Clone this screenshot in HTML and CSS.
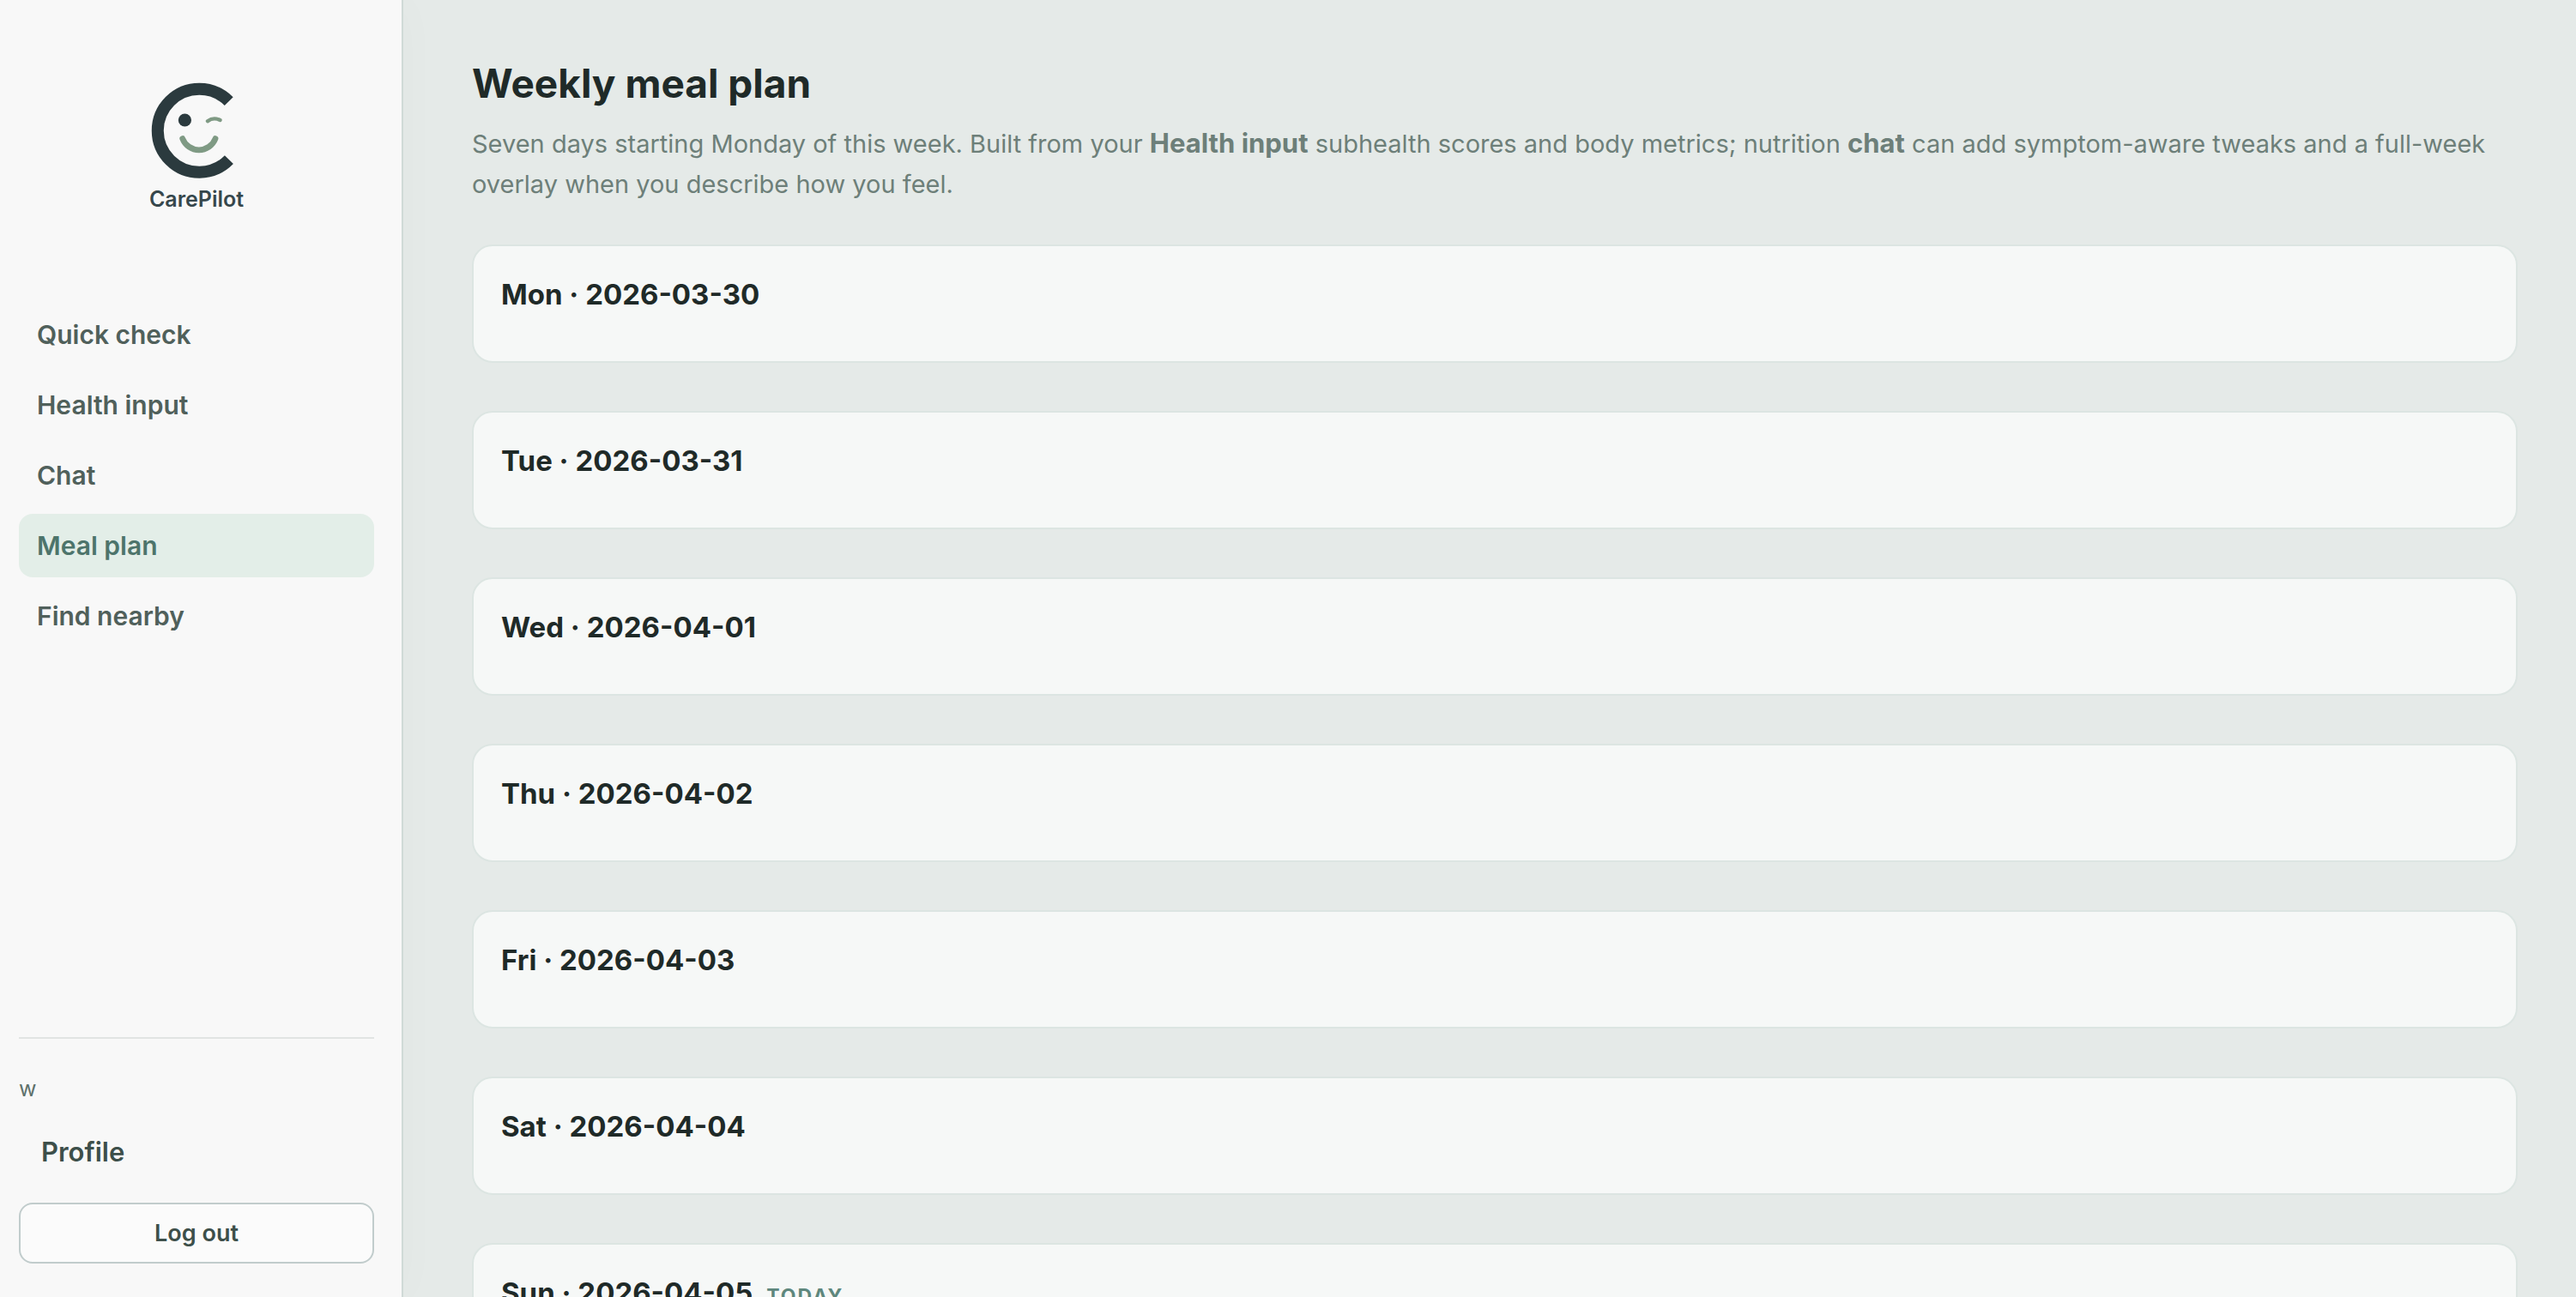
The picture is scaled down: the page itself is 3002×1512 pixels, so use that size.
FILE: index.html
```html
<!DOCTYPE html>
<html lang="en">
<head>
  <meta charset="utf-8">
  <meta name="viewport" content="width=device-width, initial-scale=1">
  <title>Weekly meal plan · CarePilot</title>
  <link rel="stylesheet" href="styles.css">
</head>
<body>
  <div class="app">
    <aside class="sidebar">
      <a class="brand" href="#">
        <svg class="brand-mark" viewBox="0 0 114 122" fill="none" aria-hidden="true">
          <path d="M94.7 26.1A48.5 48.5 0 1 0 94.9 94.2" stroke="#2b3a3e" stroke-width="14"/>
          <circle cx="43.4" cy="48" r="7.6" fill="#2b3a3e"/>
          <path d="M70 49.2Q76.5 44.2 84.5 48" stroke="#7f9a84" stroke-width="4.4" stroke-linecap="round"/>
          <path d="M40.7 69.6A20.5 20.5 0 0 0 79 69.6" stroke="#7f9a84" stroke-width="6.8" stroke-linecap="round"/>
        </svg>
        <span class="brand-name">CarePilot</span>
      </a>
      <nav class="nav" aria-label="Main">
        <a class="nav-link" href="#">Quick check</a>
        <a class="nav-link" href="#">Health input</a>
        <a class="nav-link" href="#">Chat</a>
        <a class="nav-link active" href="#" aria-current="page">Meal plan</a>
        <a class="nav-link" href="#">Find nearby</a>
      </nav>
      <div class="account">
        <span class="user">w</span>
        <a class="profile" href="#">Profile</a>
        <button class="logout" type="button">Log out</button>
      </div>
    </aside>
    <main class="content">
      <header class="page-head">
        <h1>Weekly meal plan</h1>
        <p>Seven days starting Monday of this week. Built from your <strong>Health input</strong> subhealth scores and body metrics; nutrition <strong>chat</strong> can add symptom-aware tweaks and a full-week overlay when you describe how you feel.</p>
      </header>
      <div class="days">
        <section class="day"><h2>Mon · 2026-03-30</h2></section>
        <section class="day"><h2>Tue · 2026-03-31</h2></section>
        <section class="day"><h2>Wed · 2026-04-01</h2></section>
        <section class="day"><h2>Thu · 2026-04-02</h2></section>
        <section class="day"><h2>Fri · 2026-04-03</h2></section>
        <section class="day"><h2>Sat · 2026-04-04</h2></section>
        <section class="day"><h2>Sun · 2026-04-05 <span class="today">TODAY</span></h2></section>
      </div>
    </main>
  </div>
</body>
</html>
```
FILE: styles.css
```css
* {
  box-sizing: border-box;
}

body {
  margin: 0;
  background: #e5eae8;
  color: #1f2a28;
  font-family: Inter, "Liberation Sans", sans-serif;
}

h1,
h2,
p {
  margin: 0;
}

a {
  color: inherit;
  text-decoration: none;
}

.app {
  display: flex;
  height: 100vh;
}

/* Sidebar */

.sidebar {
  display: flex;
  flex-direction: column;
  flex: none;
  width: 470px;
  padding: 92px 32px 39px 22px;
  border-right: 2px solid #d0dad7;
  background: #f8f8f8;
  box-shadow: 4px 0 48px rgba(31, 42, 40, 0.02);
}

.brand {
  display: flex;
  flex-direction: column;
  align-items: center;
  margin-bottom: 103px;
}

.brand-mark {
  width: 114px;
  height: 122px;
}

.brand-name {
  color: #36474c;
  font-size: 25px;
  font-weight: 600;
  line-height: 36px;
}

.nav {
  display: flex;
  flex: 1;
  flex-direction: column;
  gap: 8px;
}

.nav-link {
  padding: 16px 21px;
  border-radius: 16px;
  color: #50605b;
  font-size: 30px;
  font-weight: 600;
  line-height: 42px;
}

.nav-link.active {
  background: #e3eee8;
  color: #4d746b;
}

.account {
  display: flex;
  flex-direction: column;
  gap: 22px;
  padding-top: 43px;
  border-top: 2px solid #e1e4e3;
}

.user {
  color: #5e716b;
  font-size: 25px;
  line-height: 30px;
}

.profile {
  padding: 16px 26px;
  color: #3d4f4a;
  font-size: 31px;
  font-weight: 600;
  line-height: 42px;
}

.logout {
  padding: 16px;
  border: 2px solid #c1cccc;
  border-radius: 16px;
  background: #fbfbfb;
  color: #3d4f4a;
  font: 600 27px/35px Inter, "Liberation Sans", sans-serif;
}

/* Page */

.content {
  flex: 1;
  min-width: 0;
  padding: 68px 68px 68px 80px;
  overflow-y: auto;
  scrollbar-width: none;
}

.page-head {
  display: grid;
  gap: 18px;
  margin-bottom: 47px;
}

.page-head h1 {
  font-size: 46px;
  font-weight: 700;
  line-height: 58px;
}

.page-head p {
  color: #6d7f79;
  font-size: 29px;
  line-height: 47px;
}

.page-head strong {
  font-size: 31px;
  font-weight: 700;
  line-height: 1;
}

.days {
  display: grid;
  gap: 56px;
}

.day {
  padding: 36px 32px 58px;
  border: 2px solid #dce5e2;
  border-radius: 24px;
  background: #f6f8f7;
}

.day h2 {
  font-size: 33px;
  font-weight: 700;
  line-height: 40px;
}

.today {
  margin-left: 8px;
  color: #5e877d;
  font-size: 23px;
  letter-spacing: 2px;
}
```
